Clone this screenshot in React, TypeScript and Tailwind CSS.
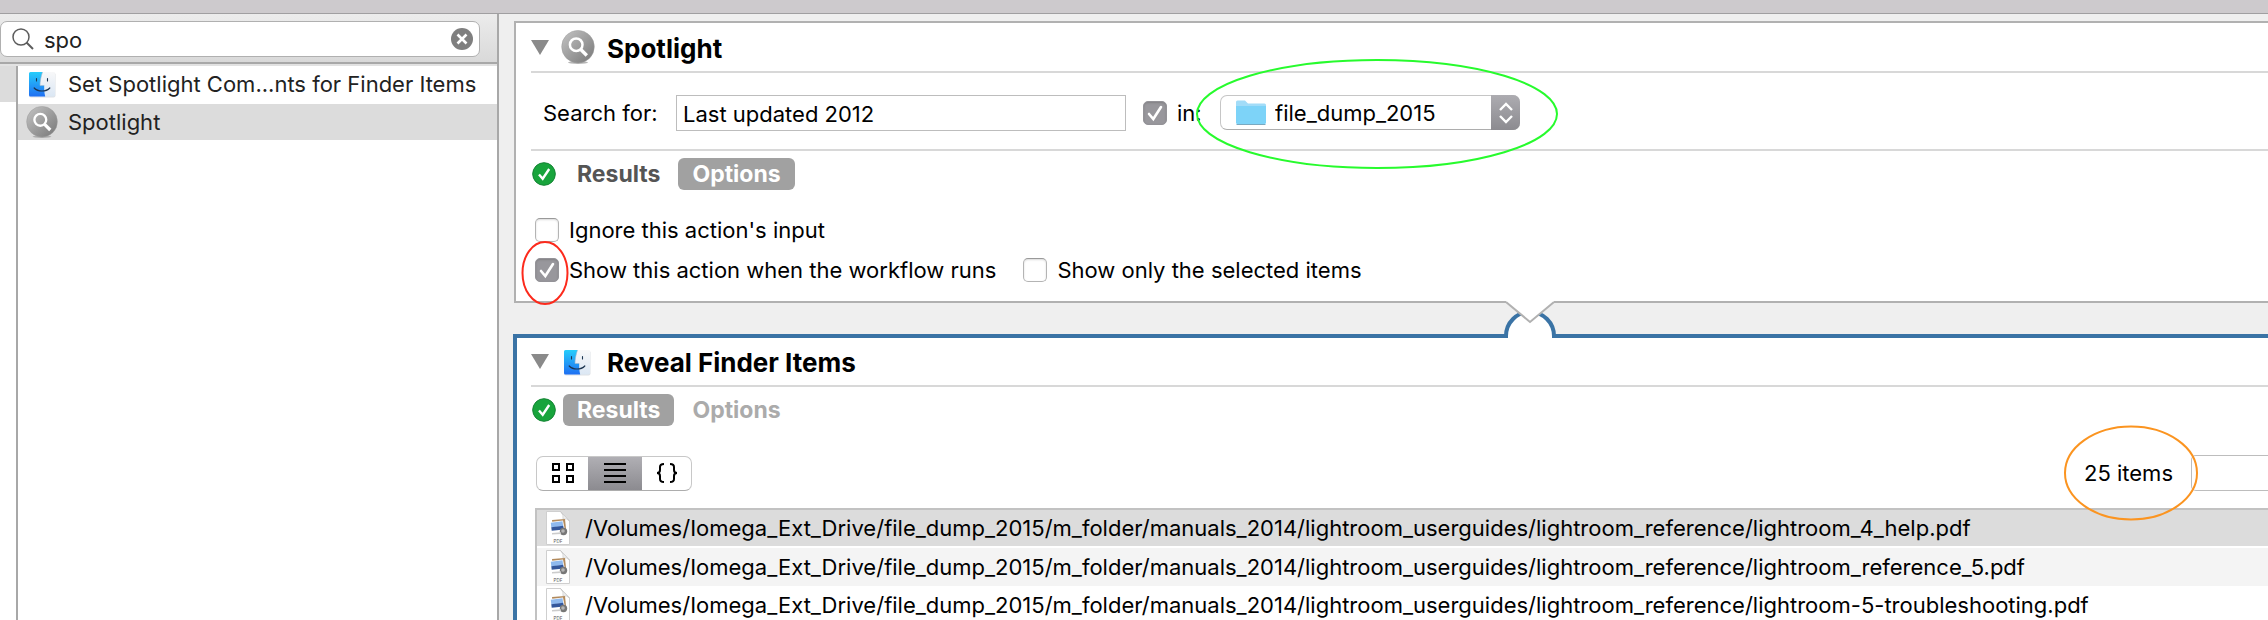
import { useId, useState } from "react";

const files = [
  "/Volumes/Iomega_Ext_Drive/file_dump_2015/m_folder/manuals_2014/lightroom_userguides/lightroom_reference/lightroom_4_help.pdf",
  "/Volumes/Iomega_Ext_Drive/file_dump_2015/m_folder/manuals_2014/lightroom_userguides/lightroom_reference/lightroom_reference_5.pdf",
  "/Volumes/Iomega_Ext_Drive/file_dump_2015/m_folder/manuals_2014/lightroom_userguides/lightroom_reference/lightroom-5-troubleshooting.pdf",
];

const FinderIcon = ({ className = "" }: { className?: string }) => {
  const id = useId();
  return (
    <svg viewBox="0 0 28 28" className={className} aria-hidden="true">
      <defs>
        <linearGradient id={`${id}b`} x1="0" y1="0" x2="0" y2="1">
          <stop offset="0" stopColor="#26cdfb" />
          <stop offset="1" stopColor="#1f6ff2" />
        </linearGradient>
        <linearGradient id={`${id}w`} x1="0" y1="0" x2="0" y2="1">
          <stop offset="0" stopColor="#f8f8f9" />
          <stop offset="1" stopColor="#dbe7f4" />
        </linearGradient>
      </defs>
      <rect x="1" y="2.500" width="26.500" height="25" rx="2" fill="#c9cfd6" opacity=".6" />
      <rect x="1" y="2" width="26" height="24.500" rx="1.500" fill={`url(#${id}w)`} />
      <path d="M2.500 2H14.500C12.800 7 12 11.500 12 15.500H16.200C16.100 19 16.300 23 17.200 26.500H2.500Q1 26.500 1 25V3.500Q1 2 2.500 2Z" fill={`url(#${id}b)`} />
      <path d="M14.500 2C12.800 7 12 11.500 12 15.500H16.200" fill="none" stroke="#9fb6cc" strokeWidth=".6" />
      <path d="M8.500 8.500V11M19.500 8.500V11" stroke="#1d3550" strokeWidth="1.100" strokeLinecap="round" />
      <path d="M6.200 18C10 22 18 22 21.800 18" fill="none" stroke="#1d3550" strokeWidth="1.200" strokeLinecap="round" />
    </svg>
  );
};

const SpotlightIcon = ({ className = "" }: { className?: string }) => {
  const id = useId();
  return (
    <svg viewBox="0 0 34 34" className={className} aria-hidden="true">
      <defs>
        <linearGradient id={id} x1="0" y1="0" x2="1" y2="1">
          <stop offset="0" stopColor="#c4c4c4" />
          <stop offset="1" stopColor="#777" />
        </linearGradient>
      </defs>
      <ellipse cx="17" cy="32.500" rx="10" ry="1.400" fill="#999" opacity=".7" />
      <circle cx="17" cy="16.700" r="16.300" fill={`url(#${id})`} stroke="#9a9a9a" strokeWidth=".5" />
      <circle cx="15.200" cy="14.700" r="6.300" fill="none" stroke="#fff" strokeWidth="2.500" />
      <path d="M19.800 19.500L25.800 25.500" stroke="#fff" strokeWidth="3.400" />
    </svg>
  );
};

const PdfIcon = () => (
  <svg viewBox="0 0 24 34" className="h-[34px] w-6 shrink-0" aria-hidden="true">
    <path d="M.5.5H14.500L23.500 10V33.500H.5Z" fill="#fff" stroke="#cfcfcf" />
    <path d="M14.500.5Q18 4 17 8Q21 7 23.500 10Z" fill="#eee" stroke="#c4c4c4" strokeWidth=".6" />
    <path d="M6 9L19 8L20 18L7 19Z" fill="#b28a5c" />
    <path d="M4 11L17 9.500L19 19.500L5 21Z" fill="#fff" />
    <path d="M4.800 11.800L16.500 10.300L17.200 15L5.300 16.500Z" fill="#8fb9ee" />
    <path d="M5.300 16.200L17.200 14.800L18 18.500L5.700 19.800Z" fill="#34579b" />
    <circle cx="17.500" cy="20.500" r="3.700" fill="#777" />
    <circle cx="17" cy="20" r="1.800" fill="#b5b5b5" />
    <path d="M6 22L15 21.200V23L6 23.500Z" fill="#ccc" />
    <text x="12" y="31.500" fontSize="4.500" textAnchor="middle" fill="#555" fontFamily="Inter, sans-serif">PDF</text>
  </svg>
);

const StatusIcon = () => (
  <svg viewBox="0 0 24 24" className="h-6 w-6 shrink-0" aria-hidden="true">
    <circle cx="12" cy="12" r="11.300" fill="#18a43c" stroke="#148434" />
    <path d="M7 12.500L10.700 16.700L17.200 7" fill="none" stroke="#fff" strokeWidth="2.400" />
  </svg>
);

const FolderIcon = () => (
  <svg viewBox="0 0 30 26" className="h-[26px] w-[30px]" aria-hidden="true">
    <path d="M0 4V2Q0 .5 1.500.5H9L12 3.500H28.500Q30 3.500 30 5V23H0Z" fill="#a2dcf8" />
    <path d="M0 6H30V22.500Q30 24 28.500 24H1.500Q0 24 0 22.500Z" fill="#7dd3f8" />
    <path d="M.5 24.500H29.500" stroke="#7aa9c0" strokeWidth="1" />
  </svg>
);

type CheckProps = { label: string; defaultChecked?: boolean; circled?: boolean };

const Check = ({ label, defaultChecked = false, circled = false }: CheckProps) => {
  const [checked, setChecked] = useState(defaultChecked);
  return (
    <label className="flex items-center gap-[10px] whitespace-nowrap">
      <span className="relative flex h-6 w-6 shrink-0">
        <input
          type="checkbox"
          checked={checked}
          onChange={(e) => setChecked(e.target.checked)}
          className="h-6 w-6 appearance-none rounded-[5px] border border-[#b4b4b4] border-t-[#999] bg-white shadow-[inset_0_1px_2px_rgba(0,0,0,0.15)] checked:border-[#949398] checked:bg-[#98979c]"
        />
        {checked && (
          <svg viewBox="0 0 24 24" className="pointer-events-none absolute inset-0" aria-hidden="true">
            <path d="M6 13L10.300 18L18 6" fill="none" stroke="#fff" strokeWidth="2.600" strokeLinecap="round" />
          </svg>
        )}
        {circled && (
          <svg viewBox="0 0 48 66" className="pointer-events-none absolute -left-[14px] -top-[18px] h-[66px] w-12 max-w-none" aria-hidden="true">
            <ellipse cx="24" cy="33" rx="22.500" ry="31" fill="none" stroke="#fc2a1c" strokeWidth="2" />
          </svg>
        )}
      </span>
      {label}
    </label>
  );
};

const Tabs = ({ active, idle }: { active: string; idle: string }) => (
  <div className="flex items-center gap-[7px] pl-px pt-[7px]">
    <StatusIcon />
    <div className="flex gap-1 text-[23px] font-bold">
      {["Results", "Options"].map((tab) => (
        <button
          key={tab}
          type="button"
          className={`h-8 rounded-md px-[14px] ${tab === active ? "bg-[#a1a1a1] text-white" : idle}`}
        >
          {tab}
        </button>
      ))}
    </div>
  </div>
);

const Disclosure = () => (
  <button type="button" aria-label="Collapse" className="w-[18px] shrink-0">
    <svg viewBox="0 0 18 15" className="h-[15px] w-[18px]" aria-hidden="true">
      <path d="M0 0H18L9 15Z" fill="#8a8a8a" />
    </svg>
  </button>
);

const Library = () => (
  <aside className="flex w-[499px] shrink-0 flex-col border-r-2 border-[#a8a8a8] bg-white">
    <div className="border-b-2 border-[#a8a8a8] bg-gradient-to-b from-[#ececec] to-[#d9d9d9] pb-[5px] pr-[17px] pt-[7px]">
      <div className="flex h-9 items-center rounded-[7px] border border-[#b0b0b0] bg-white pl-[11px] pr-[6px]">
        <svg viewBox="0 0 22 22" className="h-[22px] w-[22px] shrink-0" aria-hidden="true">
          <circle cx="9" cy="9" r="8" fill="none" stroke="#5c5c5c" strokeWidth="1.500" />
          <path d="M14.500 14.500L21 21" stroke="#5c5c5c" strokeWidth="2" />
        </svg>
        <input aria-label="Search actions" defaultValue="spo" className="ml-[10px] min-w-0 flex-1 pt-[2px] outline-none" />
        <button type="button" aria-label="Clear search">
          <svg viewBox="0 0 22 22" className="h-[22px] w-[22px]" aria-hidden="true">
            <circle cx="11" cy="11" r="11" fill="#7f7f7f" />
            <path d="M6.500 6.500L15.500 15.500M15.500 6.500L6.500 15.500" stroke="#fff" strokeWidth="2.600" />
          </svg>
        </button>
      </div>
    </div>
    <div className="flex flex-1 border-t-2 border-[#e2e2e2]">
      <div className="w-4 shrink-0">
        <div className="h-9 bg-[#dcdcdc]" />
      </div>
      <ul className="flex-1 border-l-2 border-[#a8a8a8]">
        <li className="mb-[2px] flex h-9 items-center gap-3 whitespace-nowrap pl-[10px]">
          <FinderIcon className="h-7 w-7 shrink-0" />
          Set Spotlight Com...nts for Finder Items
        </li>
        <li className="flex h-9 items-center gap-[10px] bg-[#dcdcdc] pl-[8px]">
          <SpotlightIcon className="h-8 w-8 shrink-0" />
          Spotlight
        </li>
      </ul>
    </div>
  </aside>
);

const SpotlightAction = () => (
  <section className="relative border-2 border-r-0 border-[#b1b1b1] bg-white pb-[13px] pl-[15px]">
    <header className="flex h-[50px] items-center border-b-2 border-[#d8d8d8]">
      <Disclosure />
      <SpotlightIcon className="ml-[12px] h-[34px] w-[34px] shrink-0" />
      <h2 className="ml-[12px] pt-[3px] text-[26px] font-bold">Spotlight</h2>
    </header>
    <div className="flex h-[78px] items-center border-b-2 border-[#d8d8d8] pl-3 pt-[3px]">
      <label htmlFor="search-for" className="w-[133px]">Search for:</label>
      <input
        id="search-for"
        defaultValue="Last updated 2012"
        className="h-9 w-[450px] border border-[#bdbdbd] bg-white px-[6px] pt-[2px] outline-none"
      />
      <div className="ml-[17px] w-[77px]">
        <Check label="in:" defaultChecked />
      </div>
      <div className="relative">
        <select
          aria-label="Folder"
          className="h-[35px] w-[300px] appearance-none rounded-[7px] border border-[#c6c6c6] border-b-[#adadad] bg-white pl-[54px] outline-none"
        >
          <option>file_dump_2015</option>
        </select>
        <span className="pointer-events-none absolute left-4 top-[5px]">
          <FolderIcon />
        </span>
        <span className="pointer-events-none absolute right-0 top-0 flex h-[35px] w-[29px] items-center justify-center rounded-r-[7px] bg-gradient-to-b from-[#adacb1] to-[#8c8b90]">
          <svg viewBox="0 0 14 22" className="h-[22px] w-[14px]" aria-hidden="true">
            <path d="M1 8L7 2L13 8M1 14L7 20L13 14" fill="none" stroke="#fff" strokeWidth="2.400" />
          </svg>
        </span>
        <svg viewBox="0 0 364 112" className="pointer-events-none absolute -left-[25px] -top-[37px] h-28 w-[364px] max-w-none" aria-hidden="true">
          <ellipse cx="182" cy="56" rx="180" ry="54" fill="none" stroke="#27fb2d" strokeWidth="2" />
        </svg>
      </div>
    </div>
    <Tabs active="Options" idle="text-[#555]" />
    <div className="mt-[22px] flex flex-col gap-1 pl-1">
      <div className="flex h-9 items-center">
        <Check label="Ignore this action's input" />
      </div>
      <div className="flex h-9 items-center gap-[27px]">
        <Check label="Show this action when the workflow runs" defaultChecked circled />
        <Check label="Show only the selected items" />
      </div>
    </div>
    {/* arrow into the next action */}
    <svg viewBox="0 0 56 40" className="absolute -bottom-[39px] left-[986px] z-10 h-10 w-14" aria-hidden="true">
      <path d="M4 38V36A24 24 0 0 1 52 36V38Z" fill="#fff" />
      <path d="M6 33H50V39H6Z" fill="#fff" />
      <path d="M4 38V36A24 24 0 0 1 52 36V38" fill="none" stroke="#3a73a5" strokeWidth="4" />
      <path d="M4 0V2L28 22L52 2V0Z" fill="#fff" />
      <path d="M4 2L28 22L52 2" fill="none" stroke="#b1b1b1" strokeWidth="2" />
    </svg>
  </section>
);

const segment = "flex h-full items-center justify-center";

const RevealAction = () => (
  <section className="-ml-px mt-[31px] flex-1 border-l-4 border-t-4 border-[#3a73a5] bg-white pl-[14px]">
    <header className="flex h-[49px] items-center border-b-2 border-[#d8d8d8]">
      <Disclosure />
      <FinderIcon className="ml-[14px] h-7 w-7 shrink-0" />
      <h2 className="ml-[16px] pt-[2px] text-[26px] font-bold">Reveal Finder Items</h2>
    </header>
    <Tabs active="Results" idle="text-[#ababab]" />
    <div className="flex items-center pb-[17px] pl-[5px] pt-[29px]">
      <div className="flex h-[35px] overflow-hidden rounded-[7px] border border-[#c8c8c8] border-b-[#adadad] bg-white">
        <button type="button" aria-label="Icon view" className={`${segment} w-[51px]`}>
          <svg viewBox="0 0 22 20" className="h-5 w-[22px]" fill="none" stroke="#000" strokeWidth="2" aria-hidden="true">
            <path d="M1 1H7V7H1ZM15 1H21V7H15ZM1 13H7V19H1ZM15 13H21V19H15Z" />
          </svg>
        </button>
        <button type="button" aria-label="List view" className={`${segment} w-[54px] bg-gradient-to-b from-[#b0afb4] to-[#8c8b90]`}>
          <svg viewBox="0 0 22 20" className="h-5 w-[22px]" stroke="#000" strokeWidth="2" aria-hidden="true">
            <path d="M0 1H22M0 7H22M0 13H22M0 19H22" />
          </svg>
        </button>
        <button type="button" aria-label="Source view" className={`${segment} w-[49px]`}>
          <svg viewBox="0 0 22 20" className="h-5 w-[22px]" fill="none" stroke="#000" strokeWidth="2" aria-hidden="true">
            <path d="M8 1Q4 1 4 4V7Q4 10 1 10Q4 10 4 13V16Q4 19 8 19M14 1Q18 1 18 4V7Q18 10 21 10Q18 10 18 13V16Q18 19 14 19" />
          </svg>
        </button>
      </div>
      <div className="relative ml-auto mr-[18px]">
        25 items
        <svg viewBox="0 0 136 96" className="pointer-events-none absolute -left-[21px] -top-[32px] h-24 w-[136px] max-w-none" aria-hidden="true">
          <ellipse cx="68" cy="48" rx="66" ry="46.500" fill="none" stroke="#fb9420" strokeWidth="2" />
        </svg>
      </div>
      <input aria-label="Filter results" className="h-9 w-[77px] rounded-l-[5px] border border-r-0 border-[#bdbdbd] outline-none" />
    </div>
    <ul className="ml-1 border-l-2 border-t-2 border-[#c2c2c2]">
      {files.map((file, i) => (
        <li
          key={file}
          className={`flex h-[38px] items-center gap-[15px] whitespace-nowrap pl-[9px] ${
            i === 0 ? "border-b-2 border-white bg-[#dcdcdc]" : i % 2 ? "bg-[#f4f4f4]" : "bg-white"
          }`}
        >
          <PdfIcon />
          {file}
        </li>
      ))}
    </ul>
  </section>
);

const App = () => {
  return (
    <div className="flex h-screen flex-col overflow-hidden bg-[#efefef] font-[Inter,sans-serif] text-[22px] leading-8 text-[#222]">
      <div className="h-[14px] shrink-0 border-b border-[#a09fa1] bg-[#cdcacd]" />
      <div className="flex min-h-0 flex-1">
        <Library />
        <main className="flex min-w-0 flex-1 flex-col pl-[15px] pt-[7px] text-black">
          <SpotlightAction />
          <RevealAction />
        </main>
      </div>
    </div>
  );
};

export default App;
